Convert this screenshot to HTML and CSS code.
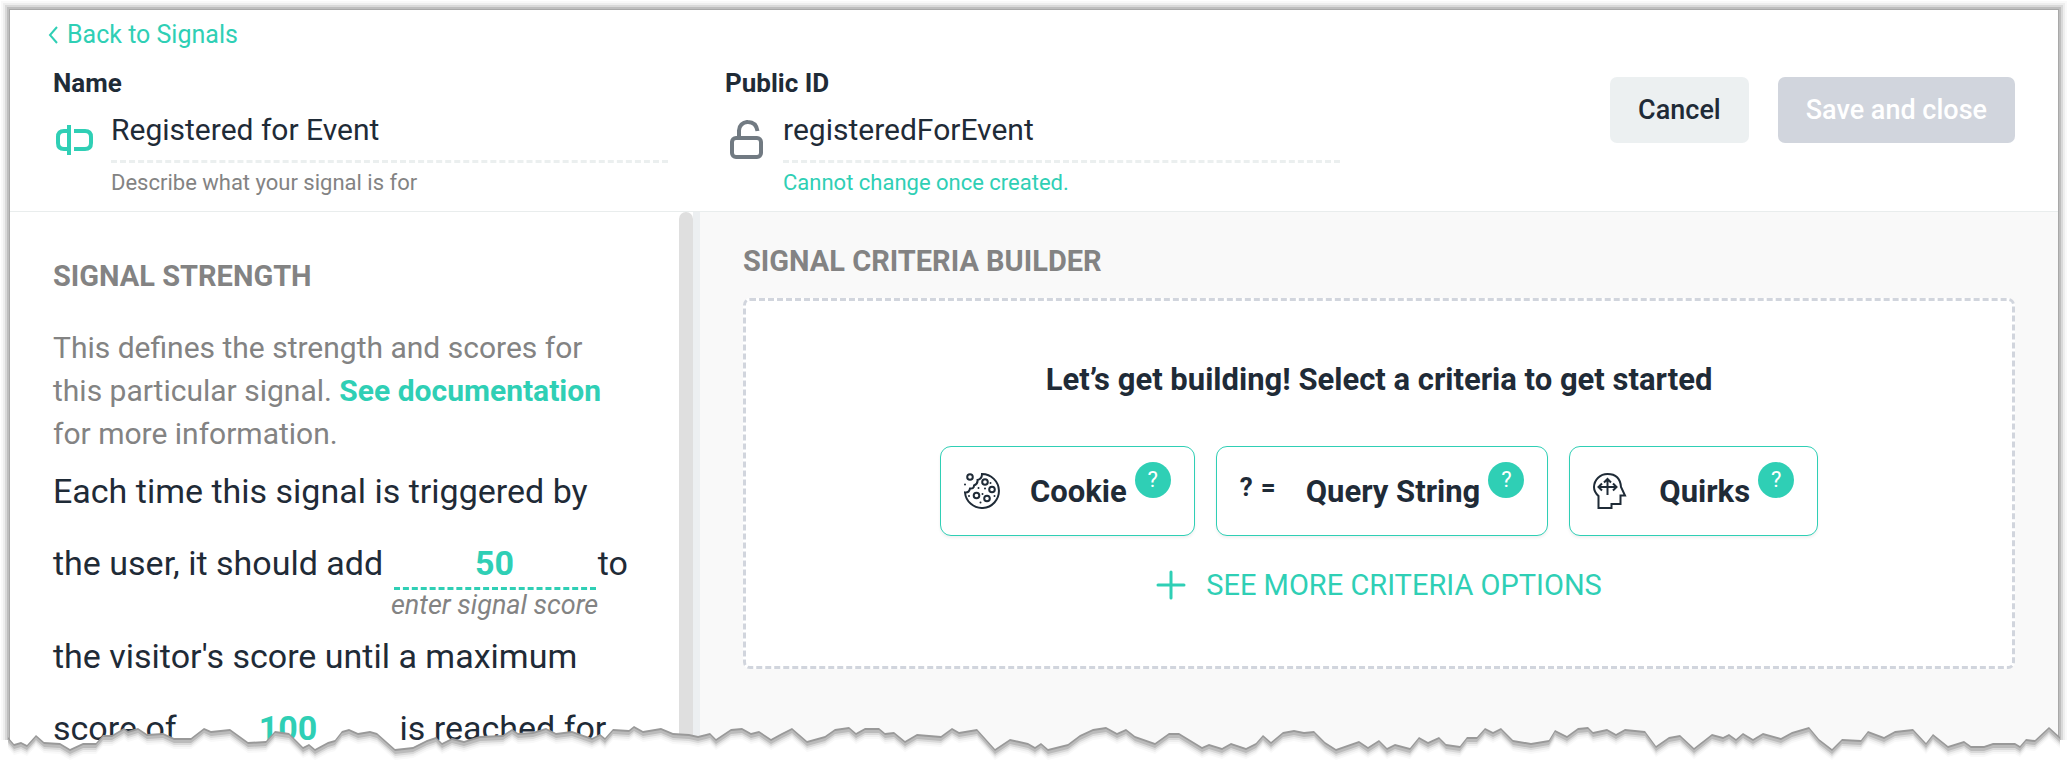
FILE: index.html
```html
<!DOCTYPE html>
<html lang="en">
<head>
    <meta charset="utf-8">
    <title>Edit Signal</title>
    <link rel="stylesheet" href="styles.css">
</head>
<body>
    <div class="window">
        <header class="header">
            <a href="#" class="back-link">
                <svg class="chevron" viewBox="0 0 12 20"><path d="M9 2 L2 10 L9 18"/></svg>
                Back to Signals
            </a>
            <div class="header-row">
                <div class="field">
                    <label class="field-label" for="signalName">Name</label>
                    <svg class="field-icon green" viewBox="0 0 40 40">
                        <path d="M16 5v30M16 11H11q-6 0-6 6v6q0 6 6 6h5M21 11h11q6 0 6 6v6q0 6-6 6h-11"/>
                    </svg>
                    <div class="field-body">
                        <input type="text" id="signalName" class="field-input" value="Registered for Event">
                        <div class="field-help">Describe what your signal is for</div>
                    </div>
                </div>
                <div class="field">
                    <label class="field-label" for="publicId">Public ID</label>
                    <svg class="field-icon grey" viewBox="0 0 40 40">
                        <rect x="7" y="18" width="29" height="19" rx="4"/>
                        <path d="M14 18V11a8.500 8.500 0 0 1 9-9q8 0 9.500 9"/>
                    </svg>
                    <div class="field-body">
                        <input type="text" id="publicId" class="field-input" value="registeredForEvent">
                        <div class="field-help green-text">Cannot change once created.</div>
                    </div>
                </div>
                <div class="actions">
                    <button class="button cancel">Cancel</button>
                    <button class="button save" disabled>Save and close</button>
                </div>
            </div>
        </header>

        <main class="content">
            <section class="strength">
                <div class="strength-body">
                    <h2 class="section-title">SIGNAL STRENGTH</h2>
                    <p class="intro">This defines the strength and scores for<br>this particular signal. <a href="#">See documentation</a><br>for more information.</p>
                    <div class="sentence">
                        Each time this signal is triggered by<br>
                        the user, it should add
                        <span class="score"><input type="text" value="50" id="signalScore"><label for="signalScore">enter signal score</label></span>to<br>
                        the visitor's score until a maximum<br>
                        score of
                        <span class="score"><input type="text" value="100" aria-label="Maximum score"></span>
                        is reached for
                    </div>
                </div>
                <div class="scroll-thumb"></div>
            </section>

            <section class="builder">
                <h2 class="section-title">SIGNAL CRITERIA BUILDER</h2>
                <div class="drop-area">
                    <h3 class="drop-title">Let’s get building! Select a criteria to get started</h3>
                    <div class="cards">
                        <button class="card">
                            <svg class="card-icon" viewBox="0 0 36 36">
                                <path d="M18 1A17 17 0 1 1 1 19.500Q5 20 6 15.500Q10 16 10 12.500Q14 11 13.500 7Q18 6 18 1Z"/>
                                <circle cx="6" cy="4" r="2.800"/>
                                <circle cx="21" cy="9" r="2.800"/>
                                <circle cx="28" cy="16.500" r="2.800"/>
                                <circle cx="12.500" cy="22.500" r="2.800"/>
                                <circle cx="23" cy="25.500" r="2.800"/>
                                <path class="dots" d="M1 11.500h.01M5 23h.01M14.500 15h.01M21 15.500h.01M18.500 21h.01M16.500 29.500h.01M26.500 10h.01M30.500 23h.01"/>
                            </svg>
                            <span class="card-name">Cookie</span>
                            <span class="badge">?</span>
                        </button>
                        <button class="card">
                            <span class="card-icon query-icon"><b>?</b><b>=</b></span>
                            <span class="card-name">Query String</span>
                            <span class="badge">?</span>
                        </button>
                        <button class="card">
                            <svg class="card-icon" viewBox="0 0 36 36">
                                <path d="M5.500 35V23Q1 19 1 14A13.500 13.500 0 0 1 14.500 1Q27 1 28 14L32 22.500H27.500V31H18.500V35Z"/>
                                <path d="M14.500 22V6M11 9.500L14.500 6L18 9.500M6 14H23M9 10.500L5.500 14L9 17.500M20 10.500L23.500 14L20 17.500"/>
                            </svg>
                            <span class="card-name">Quirks</span>
                            <span class="badge">?</span>
                        </button>
                    </div>
                    <button class="see-more">
                        <svg class="plus" viewBox="0 0 30 30"><path d="M15 2v26M2 15h26"/></svg>
                        SEE MORE CRITERIA OPTIONS
                    </button>
                </div>
            </section>
        </main>
    </div>

    <!-- torn bottom edge, each copy is one step of the shadow -->
    <svg class="torn-edge" viewBox="0 0 2068 40" preserveAspectRatio="none">
        <defs>
            <path id="tear" d="M8 60V17L14 24L21 22L27 25L36 15L44 22L60 23L70 29L83 23H96L103 15H112L124 8L128 11L138 8L147 14L163 13L174 18H191L204 8L211 11L230 9L248 22L266 21L275 11L289 13L303 27L309 24L315 29L328 22L335 20L342 11L349 9L358 13L370 11L377 13L395 29L413 27L427 20L436 17L442 23L452 18L464 21L480 16L503 15L512 9L518 13L533 12L546 8L556 13L572 11L592 18L600 14L605 18L613 9L629 10L634 6L643 11L661 8L673 13L689 14L698 16L710 13L716 19L731 9L742 8L751 13L759 11L771 19L782 13L792 8L807 21L825 16L835 9L849 7L856 13L865 8H879L885 13L894 12L905 21L917 14L941 16L952 8L959 12L977 9L995 29L1010 19L1028 23L1035 27L1041 23L1048 29L1068 24L1080 15L1093 9L1106 7L1117 13L1126 9L1135 16L1155 23L1169 13L1179 13L1202 27L1209 24L1222 28L1231 23L1246 28L1256 23L1263 15L1271 22L1283 12L1294 10L1304 12L1314 11L1325 22L1336 29L1359 21L1368 27L1379 20L1387 28L1395 24L1410 28L1419 17L1428 22L1439 17L1446 24L1460 26L1467 17H1477L1485 8L1493 12L1501 8L1513 20L1531 23L1549 20L1555 10L1567 16L1578 8L1588 7L1593 12L1607 9L1616 14L1625 9L1645 11L1656 26L1669 17L1680 15L1694 28L1712 14L1723 17L1729 14L1736 19L1743 13L1753 19L1763 13L1781 18L1792 12L1809 7L1819 19L1832 29L1842 19L1861 20L1868 11L1884 17L1895 11L1913 9L1926 23L1933 14L1948 26L1964 21L1971 26H1984L1993 23H2015L2020 26L2026 19L2035 20L2049 7L2060 17V60Z"/>
        </defs>
        <use href="#tear" fill="#999999"/>
        <use href="#tear" y="2" fill="#bbbbbb"/>
        <use href="#tear" y="5" fill="#d9d9d9"/>
        <use href="#tear" y="7" fill="#eeeeee"/>
        <use href="#tear" y="9" fill="#f9f9f9"/>
        <use href="#tear" y="11" fill="#ffffff"/>
    </svg>
</body>
</html>
```
FILE: styles.css
```css
* {
    box-sizing: border-box;
}

body {
    margin: 0;
    height: 100vh;
    overflow: hidden;
    position: relative;
    font-family: Roboto, "Liberation Sans", sans-serif;
    background: #fff;
    color: #1f2b37;
    font-size: 29px;
}

button, input {
    font-family: inherit;
    color: inherit;
}

svg {
    fill: none;
    stroke: currentColor;
}

.window {
    display: flex;
    flex-direction: column;
    height: 100%;
    margin: 0 10px;
    border-top: 10px solid transparent;
    background: #fff;
    background-clip: padding-box;
}

.window::before {
    content: "";
    position: absolute;
    top: 10px;
    left: 10px;
    right: 10px;
    bottom: 20px;
    box-shadow: 0 0 0 1px #a8a8a8, 0 0 0 3px #bebebe, 0 0 0 5px #d9d9d9, 0 0 0 7px #eeeeee, 0 0 0 9px #f9f9f9;
    clip-path: inset(-10px -10px 0 -10px);
    pointer-events: none;
}

.header {
    padding: 9px 43px 12px 38px;
    border-bottom: 1px solid #e9eded;
}

.back-link {
    display: flex;
    align-items: center;
    gap: 7px;
    line-height: 32px;
    font-size: 25px;
    color: #2fcfb5;
    text-decoration: none;
}

.chevron {
    width: 12px;
    height: 20px;
    stroke-width: 2;
}

.header-row {
    display: flex;
    gap: 57px;
    margin-top: 16px;
    padding-left: 5px;
}

.field {
    flex: 0 1 615px;
    display: grid;
    grid-template-columns: 58px 1fr;
}

.field-label {
    grid-column: 1 / 3;
    font-size: 26px;
    line-height: 32px;
    font-weight: bold;
}

.field-icon {
    width: 40px;
    height: 40px;
    margin-top: 21px;
    stroke-width: 4;
}

.green {
    color: #2fcfb5;
}

.grey {
    color: #717a82;
}

.field-input {
    display: block;
    width: 100%;
    height: 64px;
    padding: 0;
    border: none;
    border-bottom: 3px dashed #ebefef;
    background: none;
    font-size: 30px;
    outline: none;
}

.field-help {
    margin-top: 4px;
    font-size: 22px;
    line-height: 32px;
    color: #838383;
}

.green-text {
    color: #2fcfb5;
}

.actions {
    display: flex;
    align-items: flex-start;
    gap: 29px;
    margin-left: auto;
    padding-top: 10px;
}

.button {
    height: 66px;
    padding: 0 28px;
    border: none;
    border-radius: 7px;
    font-size: 27px;
    font-weight: 500;
    white-space: nowrap;
    cursor: pointer;
}

.cancel {
    background: #ecf0f1;
}

.save {
    background: #d1d5dd;
    color: #fff;
}

.content {
    flex: 1;
    display: flex;
    min-height: 0;
}

.strength {
    flex: 0 1 690px;
    display: flex;
    overflow: hidden;
    border-right: 7px solid #eceff1;
}

.strength-body {
    flex: 1;
    padding: 46px 0 0 43px;
    white-space: nowrap;
}

.scroll-thumb {
    width: 14px;
    border-radius: 7px 7px 0 0;
    background: #dfdfdf;
}

.section-title {
    margin: 0;
    font-size: 29px;
    line-height: 36px;
    font-weight: bold;
    color: #838383;
}

.intro {
    margin: 32px 0 0;
    font-size: 30px;
    line-height: 43px;
    color: #838383;
}

.intro a {
    color: #2fcfb5;
    font-weight: bold;
    text-decoration: none;
}

.sentence {
    font-size: 34px;
    line-height: 72px;
}

.score {
    display: inline-flex;
    flex-direction: column;
    align-items: center;
    width: 202px;
    margin: 0 2px;
    line-height: 30px;
}

.score input {
    width: 100%;
    height: 50px;
    padding: 0;
    border: none;
    border-bottom: 3px dashed #2fcfb5;
    background: none;
    color: #2fcfb5;
    font-size: 34px;
    font-weight: bold;
    text-align: center;
    outline: none;
}

.score label {
    font-size: 27px;
    font-style: italic;
    color: #838383;
}

.builder {
    flex: 1;
    padding: 31px 43px 0;
    background: #f9f9f9;
}

.drop-area {
    display: flex;
    flex-direction: column;
    align-items: center;
    margin-top: 19px;
    padding: 61px 20px 63px;
    background: #fff;
    border: 3px dashed #d1d5dd;
    border-radius: 7px;
}

.drop-title {
    margin: 0;
    font-size: 31px;
    line-height: 36px;
    font-weight: bold;
}

.cards {
    display: flex;
    gap: 21px;
    margin-top: 48px;
}

.card {
    display: flex;
    align-items: center;
    height: 90px;
    padding: 0 23px;
    background: #fff;
    border: 1px solid #2fcfb5;
    border-radius: 11px;
    box-shadow: 0 2px 3px rgba(0, 0, 0, 0.06);
    cursor: pointer;
}

.card-icon {
    width: 36px;
    height: 36px;
    margin-right: 30px;
    stroke-width: 2;
}

.dots {
    stroke-linecap: round;
}

.query-icon {
    display: flex;
    justify-content: space-between;
    line-height: 28px;
    font-size: 26px;
}

.card-name {
    font-size: 31px;
    font-weight: bold;
}

.badge {
    align-self: flex-start;
    width: 36px;
    height: 36px;
    margin: 15px 0 0 8px;
    border-radius: 50%;
    background: #2fcfb5;
    color: #fff;
    font-size: 22px;
    line-height: 36px;
}

.see-more {
    display: flex;
    align-items: center;
    gap: 20px;
    margin-top: 31px;
    padding: 0;
    border: none;
    background: none;
    color: #2fcfb5;
    font-size: 29px;
    line-height: 36px;
    cursor: pointer;
}

.plus {
    width: 30px;
    height: 30px;
    stroke-width: 3;
    stroke-linecap: round;
}

.torn-edge {
    position: absolute;
    left: 0;
    bottom: 0;
    width: 100%;
    height: 40px;
    stroke: none;
}
```
